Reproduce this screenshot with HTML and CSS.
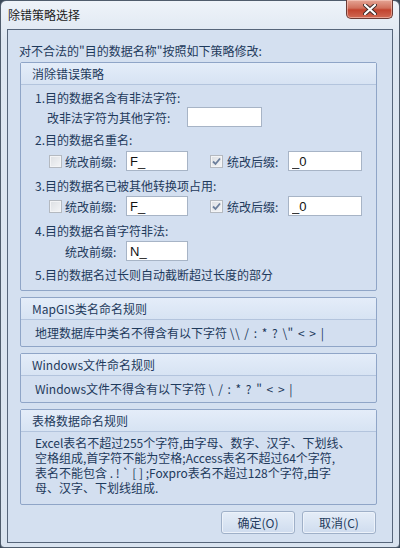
FILE: index.html
```html
<!DOCTYPE html>
<html lang="zh-CN">

<head>
    <meta charset="UTF-8">
    <meta name="viewport" content="width=device-width, initial-scale=1.0">
    <link rel="stylesheet" href="styles.css">
</head>

<body>
    <div class="window">
        <div class="titlebar">
            <span class="title">除错策略选择</span>
            <button class="btn-close" aria-label="关闭">
                <svg width="14" height="11" viewBox="0 0 14 11">
                    <path d="M2 1 L12 10 M12 1 L2 10" stroke="#3b2a28" stroke-width="4" stroke-linecap="round" />
                    <path d="M2 1 L12 10 M12 1 L2 10" stroke="#ffffff" stroke-width="2.2" stroke-linecap="round" />
                </svg>
            </button>
        </div>

        <div class="client">
            <div class="intro">对不合法的"目的数据名称"按照如下策略修改:</div>

            <div class="group">
                <div class="group-head">消除错误策略</div>
                <div class="group-body group-main">
                    <div class="line line-1">1.目的数据名含有非法字符:</div>
                    <div class="field-row indent-wide">
                        <span class="label label-wide">改非法字符为其他字符:</span>
                        <input class="input input-wide" type="text" value="">
                    </div>

                    <div class="line line-2">2.目的数据名重名:</div>
                    <div class="field-row field-2 indent">
                        <span class="check"></span>
                        <span class="label">统改前缀:</span>
                        <input class="input input-short" type="text" value="F_">
                        <span class="check check-on">
                            <svg width="9" height="9" viewBox="0 0 9 9">
                                <path d="M1 4.5 L3.5 7 L8 1.5" fill="none" stroke="#6c7f9c" stroke-width="1.8" />
                            </svg>
                        </span>
                        <span class="label">统改后缀:</span>
                        <input class="input input-long" type="text" value="_0">
                    </div>

                    <div class="line line-3">3.目的数据名已被其他转换项占用:</div>
                    <div class="field-row indent">
                        <span class="check"></span>
                        <span class="label">统改前缀:</span>
                        <input class="input input-short" type="text" value="F_">
                        <span class="check check-on">
                            <svg width="9" height="9" viewBox="0 0 9 9">
                                <path d="M1 4.5 L3.5 7 L8 1.5" fill="none" stroke="#6c7f9c" stroke-width="1.8" />
                            </svg>
                        </span>
                        <span class="label">统改后缀:</span>
                        <input class="input input-long" type="text" value="_0">
                    </div>

                    <div class="line line-4">4.目的数据名首字符非法:</div>
                    <div class="field-row indent-label">
                        <span class="label">统改前缀:</span>
                        <input class="input input-short" type="text" value="N_">
                    </div>

                    <div class="line line-5">5.目的数据名过长则自动截断超过长度的部分</div>
                </div>
            </div>

            <div class="group">
                <div class="group-head">MapGIS类名命名规则</div>
                <div class="group-body group-rule">地理数据库中类名不得含有以下字符 <span class="symbols">\\ / : * ? \" &lt; &gt; |</span></div>
            </div>

            <div class="group">
                <div class="group-head">Windows文件命名规则</div>
                <div class="group-body group-rule">Windows文件不得含有以下字符 <span class="symbols">\ / : * ? " &lt; &gt; |</span></div>
            </div>

            <div class="group">
                <div class="group-head">表格数据命名规则</div>
                <div class="group-body group-table">
                    Excel表名不超过255个字符,由字母、数字、汉字、下划线、<br>
                    空格组成,首字符不能为空格;Access表名不超过64个字符,<br>
                    表名不能包含 . ! ` [ ] ;Foxpro表名不超过128个字符,由字<br>
                    母、汉字、下划线组成.
                </div>
            </div>

            <div class="actions">
                <button class="btn">确定(O)</button>
                <button class="btn">取消(C)</button>
            </div>
        </div>
    </div>
</body>

</html>
```

FILE: styles.css
```css
* {
    box-sizing: border-box;
}

body {
    margin: 0;
    font-family: "Noto Sans CJK SC", "Microsoft YaHei", sans-serif;
    font-size: 12px;
    color: #1e3a5c;
    background: #3c4a5a;
}

.window {
    width: 400px;
    height: 548px;
    display: flex;
    flex-direction: column;
    border: 1px solid #4f5c6c;
    border-radius: 6px 6px 4px 4px;
    background: linear-gradient(to bottom, #eef3f9 0%, #dde6f1 40px, #d9e3ef 100%);
    padding: 0 6px 4px 6px;
}

/* title bar */
.titlebar {
    height: 28px;
    display: flex;
    align-items: flex-start;
    flex-shrink: 0;
}

.title {
    line-height: 28px;
    padding-left: 1px;
    color: #1b1b1b;
}

.btn-close {
    margin-left: auto;
    width: 47px;
    height: 19px;
    margin-top: -1px;
    padding: 0;
    border: 1px solid #6b3b35;
    border-top: none;
    border-radius: 0 0 5px 5px;
    background: linear-gradient(to bottom, #e5a595 0%, #d0705c 45%, #c2432e 55%, #d06a54 100%);
    box-shadow: inset 0 0 0 1px rgba(255, 220, 210, 0.5);
    display: flex;
    align-items: center;
    justify-content: center;
}

/* client area */
.client {
    flex: 1;
    border: 1px solid #56657a;
    background: #d4e0f0;
    padding: 13px 15px 0 12px;
    display: flex;
    flex-direction: column;
}

.intro {
    line-height: 16px;
    margin-left: -1px;
}

.group {
    border: 1px solid #8fa5c7;
    border-radius: 2px;
    margin-top: 6px;
    background: #d3dff0;
}

.intro + .group {
    margin-top: 3px;
}

.group-head {
    height: 22px;
    line-height: 21px;
    padding-left: 11px;
    border-bottom: 1px solid #b3c4dd;
    background: linear-gradient(to bottom, #e4edf9, #d7e3f3);
}

.group-body {
    padding-left: 14px;
}

.group-main {
    padding-top: 3px;
    padding-bottom: 5px;
}

.group-rule {
    line-height: 16px;
    padding-top: 5px;
    padding-bottom: 5px;
}

.symbols {
    letter-spacing: 0.5px;
    word-spacing: 1px;
}

.group-table {
    line-height: 15px;
    padding-top: 3px;
    padding-bottom: 9px;
}

.line {
    height: 20px;
    line-height: 20px;
}

.line-1 {
    height: 19px;
    line-height: 19px;
}

.line-2 {
    margin-top: 3px;
}

.line-3 {
    margin-top: 5px;
}

.line-4 {
    margin-top: 5px;
}

.line-5 {
    margin-top: 4px;
}

.field-row {
    height: 20px;
    display: flex;
    align-items: center;
}

.field-2 {
    margin-top: 1px;
}

.indent-wide {
    padding-left: 12px;
}

.indent {
    padding-left: 14px;
}

.indent-label {
    padding-left: 30px;
}

.label {
    width: 61px;
    white-space: nowrap;
}

.label-wide {
    width: 140px;
}

.check {
    width: 13px;
    height: 13px;
    margin-right: 3px;
    border: 1px solid #b4b9c0;
    background: linear-gradient(135deg, #dcdfe3, #f4f5f7);
    box-shadow: inset 0 0 0 1px #f3f4f6;
    display: flex;
    align-items: center;
    justify-content: center;
}

.check-on {
    margin-left: 22px;
    margin-right: 4px;
}

.input {
    height: 20px;
    border: 1px solid #a7b4c6;
    background: #ffffff;
    font-family: "Liberation Sans", "Noto Sans CJK SC", sans-serif;
    font-size: 13px;
    color: #111111;
    padding: 0 3px;
    outline: none;
}

.input-wide {
    width: 75px;
}

.input-short {
    width: 62px;
}

.input-long {
    width: 74px;
}

/* dialog buttons */
.actions {
    display: flex;
    justify-content: flex-end;
    gap: 7px;
    margin-top: 6px;
    margin-right: 1px;
}

.btn {
    width: 74px;
    height: 23px;
    border: 1px solid #9fb0c8;
    border-radius: 3px;
    background: linear-gradient(to bottom, #e5edf8 0%, #dae5f3 50%, #cfdcee 100%);
    box-shadow: inset 0 0 0 1px #ecf2fa;
    font-family: "Noto Sans CJK SC", "Microsoft YaHei", sans-serif;
    font-size: 12px;
    color: #1e3a5c;
    padding: 0;
}
```
